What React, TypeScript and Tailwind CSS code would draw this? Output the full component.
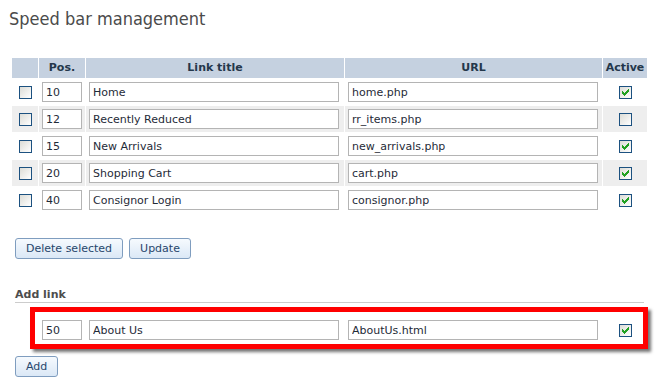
import type { ReactNode } from "react";

type LinkRow = {
  pos: string;
  title: string;
  url: string;
  active: boolean;
};

const rows: LinkRow[] = [
  { pos: "10", title: "Home", url: "home.php", active: true },
  { pos: "12", title: "Recently Reduced", url: "rr_items.php", active: false },
  { pos: "15", title: "New Arrivals", url: "new_arrivals.php", active: true },
  { pos: "20", title: "Shopping Cart", url: "cart.php", active: true },
  { pos: "40", title: "Consignor Login", url: "consignor.php", active: true },
];

function Checkbox({ checked }: { checked: boolean }) {
  return (
    <span className="relative block h-[13px] w-[13px] border border-[#1c5180] bg-gradient-to-br from-[#dcdcd6] to-white">
      {checked && (
        <svg
          className="absolute left-[2px] top-[2px]"
          width="7"
          height="7"
          viewBox="0 0 7 7"
          shapeRendering="crispEdges"
        >
          <path
            d="M0 2h1v1h1v1h1V3h1V2h1V1h1V0h1v3H6v1H5v1H4v1H3v1H2V6H1V5H0z"
            fill="#21a121"
          />
        </svg>
      )}
    </span>
  );
}

function TextBox({ value, width }: { value: string; width: string }) {
  return (
    <input
      readOnly
      value={value}
      className={`${width} h-[20px] border border-[#b4b4b4] bg-white px-[3px] text-[11px] text-[#1f2b38] outline-none`}
    />
  );
}

function Cell({ children, shaded, className = "" }: { children?: ReactNode; shaded?: boolean; className?: string }) {
  return (
    <div className={`flex h-[26px] items-center ${shaded ? "bg-[#eeeeee]" : ""} ${className}`}>
      {children}
    </div>
  );
}

function Button({ children }: { children: ReactNode }) {
  return (
    <button className="h-[21px] rounded-[3px] border border-[#7f9dbf] bg-gradient-to-b from-[#f6fafe] to-[#dbe8f6] px-[10px] text-[11px] leading-none text-[#27466c]">
      {children}
    </button>
  );
}

export default function App() {
  const head = "flex h-[20px] items-center justify-center bg-[#c5d1e0] text-[11px] font-bold text-[#24374b]";

  return (
    <div className="h-[383px] w-[660px] overflow-hidden bg-white pl-[12px] font-['DejaVu_Sans',sans-serif] text-[#1f2b38]">
      <h1 className="ml-[-3px] pt-[8px] font-['DejaVu_Sans_Condensed','DejaVu_Sans',sans-serif] text-[18px] leading-[22px] text-[#4b4b4b] [font-stretch:condensed]">
        Speed bar management
      </h1>

      <div className="mt-[28px] grid w-[635px] grid-cols-[26px_46px_258px_257px_44px] gap-px">
        <div className={head}></div>
        <div className={head}>Pos.</div>
        <div className={head}>Link title</div>
        <div className={head}>URL</div>
        <div className={head}>Active</div>

        {rows.map((row, i) => {
          const shaded = i % 2 === 1;
          return (
            <div key={row.pos} className="contents">
              <Cell shaded={shaded} className="justify-center">
                <Checkbox checked={false} />
              </Cell>
              <Cell shaded={shaded} className="pl-[3px]">
                <TextBox value={row.pos} width="w-[40px]" />
              </Cell>
              <Cell shaded={shaded} className="pl-[3px]">
                <TextBox value={row.title} width="w-[250px]" />
              </Cell>
              <Cell shaded={shaded} className="pl-[3px]">
                <TextBox value={row.url} width="w-[250px]" />
              </Cell>
              <Cell shaded={shaded} className="justify-center">
                <Checkbox checked={row.active} />
              </Cell>
            </div>
          );
        })}
      </div>

      <div className="mt-[25px] flex gap-[6px] pl-[3px]">
        <Button>Delete selected</Button>
        <Button>Update</Button>
      </div>

      <div className="ml-[3px] mt-[29px] w-[629px] border-b border-[#cccccc] text-[11px] font-bold leading-[14px] text-[#4d4d4d]">
        Add link
      </div>

      <div className="relative mt-[14px] grid w-[635px] grid-cols-[26px_46px_258px_257px_44px] gap-px">
        <Cell />
        <Cell className="pl-[3px]">
          <TextBox value="50" width="w-[40px]" />
        </Cell>
        <Cell className="pl-[3px]">
          <TextBox value="About Us" width="w-[250px]" />
        </Cell>
        <Cell className="pl-[3px]">
          <TextBox value="AboutUs.html" width="w-[250px]" />
        </Cell>
        <Cell className="justify-center">
          <Checkbox checked />
        </Cell>
        <div className="pointer-events-none absolute left-[18px] top-[-10px] h-[42px] w-[618px] border-[5px] border-[#ff0000] shadow-[3px_3px_3px_rgba(0,0,0,0.55)]" />
      </div>

      <div className="mt-[10px] pl-[3px]">
        <Button>Add</Button>
      </div>
    </div>
  );
}
